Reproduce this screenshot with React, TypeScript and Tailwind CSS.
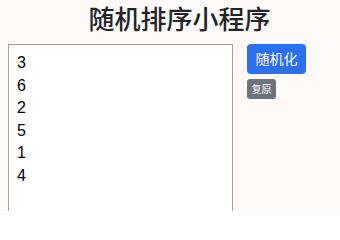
import React, { useState } from 'react';

const initial = ['3', '6', '2', '5', '1', '4'];

const App: React.FC = () => {
    const [text, setText] = useState(initial.join('\n'));

    const shuffle = () => {
        const items = text.split('\n').filter((s) => s.trim() !== '');
        for (let i = items.length - 1; i > 0; i--) {
            const j = Math.floor(Math.random() * (i + 1));
            [items[i], items[j]] = [items[j], items[i]];
        }
        setText(items.join('\n'));
    };

    return (
        <div className="h-[211px] bg-[#fffafa] px-[8px] overflow-hidden font-['Liberation_Sans','Noto_Sans_CJK_SC',sans-serif]">
            <h1 className="pl-[19px] pt-[3px] text-center text-[26px] leading-[34px] font-medium text-[#212529]">
                随机排序小程序
            </h1>

            <div className="mt-[7px] flex items-start gap-[14px]">
                {/* 输入框 */}
                <textarea
                    value={text}
                    onChange={(e) => setText(e.target.value)}
                    className="w-[225px] h-[200px] resize-none bg-white border border-[#a0a0a0] px-[8px] pt-[7px] text-[16px] leading-[22.6px] text-black outline-none"
                />

                <div className="flex flex-col items-start gap-[5px]">
                    <button
                        onClick={shuffle}
                        className="w-[59px] h-[30px] rounded-[4px] bg-[#2b6ff2] text-white text-[14px]"
                    >
                        随机化
                    </button>
                    <button
                        onClick={() => setText(initial.join('\n'))}
                        className="w-[29px] h-[20px] rounded-[3px] bg-[#6c757d] text-white text-[10px]"
                    >
                        复原
                    </button>
                </div>
            </div>
        </div>
    );
};

export default App;
